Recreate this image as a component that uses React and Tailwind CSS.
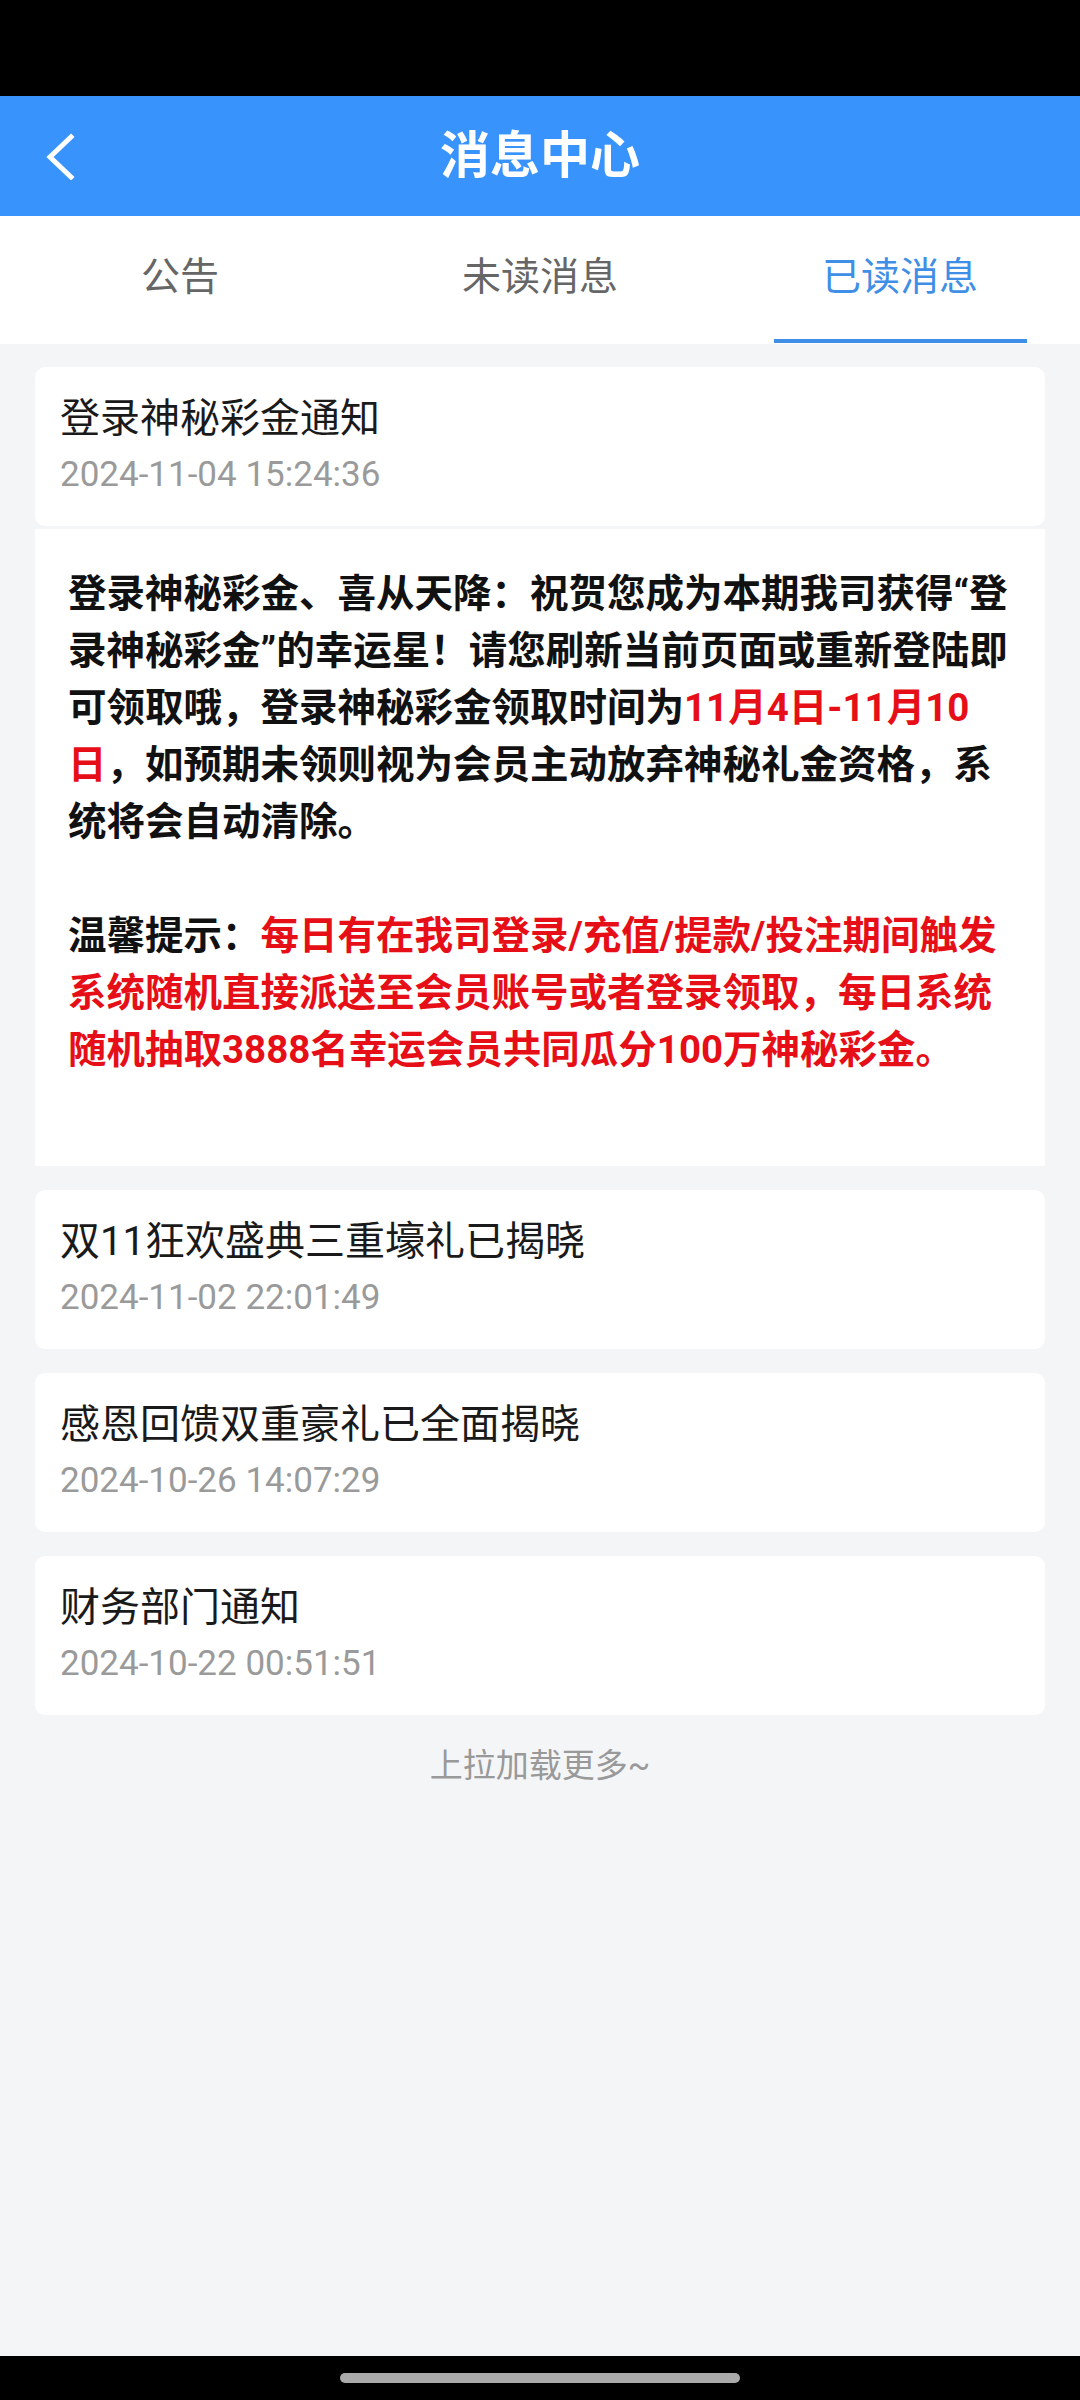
import React, { useState } from 'react';

const FONT = "font-['Roboto','Noto_Sans_CJK_SC',sans-serif]";

const messages = [
    { id: 1, title: '登录神秘彩金通知', time: '2024-11-04 15:24:36', open: true },
    { id: 2, title: '双11狂欢盛典三重壕礼已揭晓', time: '2024-11-02 22:01:49' },
    { id: 3, title: '感恩回馈双重豪礼已全面揭晓', time: '2024-10-26 14:07:29' },
    { id: 4, title: '财务部门通知', time: '2024-10-22 00:51:51' },
];

const tabs = ['公告', '未读消息', '已读消息'];

const Red = ({ children }) => <span className="text-[#e60f17]">{children}</span>;

const MessageBody = () => (
    <div className="bg-white mt-[3px] px-[33px] pt-[36px] pb-[31px]">
        <p className="text-[38.5px] leading-[57px] font-bold text-[#111] whitespace-nowrap">
            登录神秘彩金、喜从天降：祝贺您成为本期我司获得“登<br />
            录神秘彩金”的幸运星！请您刷新当前页面或重新登陆即<br />
            可领取哦，登录神秘彩金领取时间为<Red>11月4日-11月10</Red><br />
            <Red>日</Red>，如预期未领则视为会员主动放弃神秘礼金资格，系<br />
            统将会自动清除。
        </p>
        <p className="h-[57px]" />
        <p className="text-[38.5px] leading-[57px] font-bold text-[#111] whitespace-nowrap">
            温馨提示：<Red>每日有在我司登录/充值/提款/投注期间触发</Red><br />
            <Red>系统随机直接派送至会员账号或者登录领取，每日系统</Red><br />
            <Red>随机抽取3888名幸运会员共同瓜分100万神秘彩金。</Red>
        </p>
        <p className="h-[57px]" />
    </div>
);

const MessageCard = ({ msg }) => (
    <div>
        <div className="bg-white rounded-[10px] px-[25px] pt-[26px] pb-[31px]">
            <div className="text-[40px] leading-[52px] text-[#1a1a1a]">{msg.title}</div>
            <div className="mt-[10px] text-[35px] leading-[40px] text-[#9a9a9a]">{msg.time}</div>
        </div>
        {msg.open && <MessageBody />}
    </div>
);

export default function App() {
    const [active, setActive] = useState(2);

    return (
        <div className={`${FONT} h-[2400px] flex flex-col bg-[#f4f5f7]`}>
            <div className="h-[96px] bg-black" />

            <header className="h-[120px] bg-[#3894fc] flex items-center relative">
                <button className="pl-[44px] pr-4 h-full flex items-center">
                    <svg width="32" height="48" viewBox="0 0 32 48" fill="none">
                        <path d="M27 5 L6 25 L27 45" stroke="white" strokeWidth="5" strokeLinecap="square" strokeLinejoin="miter" />
                    </svg>
                </button>
                <h1 className="absolute left-1/2 -translate-x-1/2 text-white text-[50px] font-bold leading-none">消息中心</h1>
            </header>

            <nav className="h-[128px] bg-white grid grid-cols-3">
                {tabs.map((t, i) => (
                    <button
                        key={t}
                        onClick={() => setActive(i)}
                        className={`relative flex items-center justify-center pb-[6px] text-[39px] ${
                            active === i ? 'text-[#3f8fe6]' : 'text-[#666]'
                        }`}
                    >
                        {t}
                        {active === i && (
                            <span className="absolute bottom-[1px] left-[54px] right-[53px] h-[4px] bg-[#3f8fe6]" />
                        )}
                    </button>
                ))}
            </nav>

            <main className="flex-1 px-[35px] pt-[23px] flex flex-col gap-[24px]">
                {messages.map((m) => (
                    <MessageCard key={m.id} msg={m} />
                ))}
                <div className="text-center text-[33px] leading-[40px] text-[#999] mt-[7px]">上拉加载更多~</div>
            </main>

            <div className="h-[44px] bg-black flex justify-center pt-[17px]">
                <div className="w-[400px] h-[10px] rounded-full bg-[#aaa]" />
            </div>
        </div>
    );
}
